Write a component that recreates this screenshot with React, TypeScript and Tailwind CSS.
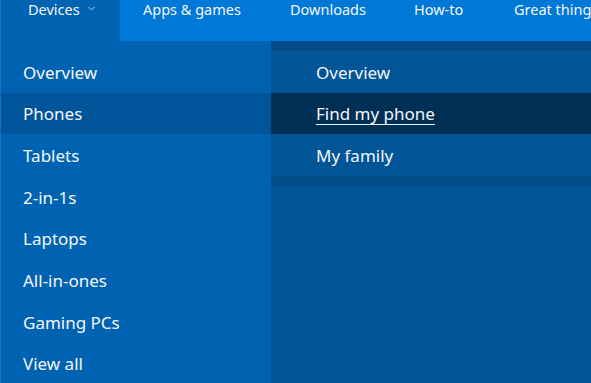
const NAV = [
  { label: 'Apps & games', w: 'w-[147px]' },
  { label: 'Downloads', w: 'w-[124px]' },
  { label: 'How-to', w: 'w-[100px]' },
  { label: 'Great things', w: 'w-[120px]' },
]

const LEFT = ['Overview', 'Phones', 'Tablets', '2-in-1s', 'Laptops', 'All-in-ones', 'Gaming PCs', 'View all']

const RIGHT = ['Overview', 'Find my phone', 'My family']

const font = { fontFamily: '"Segoe UI", "Noto Sans", "Open Sans", sans-serif' }

export default function App() {
  return (
    <div className="flex h-[383px] w-[591px] flex-col overflow-hidden bg-[#0078d7] text-[17px] text-[#f4f6f9]" style={font}>
      {/* top bar */}
      <div className="flex h-[41px] shrink-0 items-start whitespace-nowrap text-[14.5px]">
        <div className="flex h-full w-[120px] shrink-0 items-start border-l border-[#0a74cc] bg-[#0063b1] pl-[27px]">
          <span className="-mt-[1px] leading-[20px]">Devices</span>
          <svg className="ml-[8px] mt-[6px]" width="7" height="5" viewBox="0 0 7 5" fill="none">
            <path d="M0.5 1 L3.5 4 L6.5 1" stroke="#b9cfea" strokeWidth="1" />
          </svg>
        </div>
        <div className="ml-[23px] flex">
          {NAV.map((n) => (
            <span key={n.label} className={`-mt-[1px] shrink-0 leading-[20px] ${n.w}`}>
              {n.label}
            </span>
          ))}
        </div>
      </div>

      {/* dropdown */}
      <div className="flex flex-1">
        <div className="flex w-[271px] shrink-0 flex-col border-l border-[#0a74cc] bg-[#0063b1] pt-[10px]">
          {LEFT.map((n) => (
            <div
              key={n}
              className={`flex h-[41.7px] shrink-0 items-center pl-[22px] pt-[1px] ${n === 'Phones' ? 'bg-[#005499]' : ''}`}
            >
              {n}
            </div>
          ))}
        </div>
        <div className="flex flex-1 flex-col bg-[#005597]">
          <div className="h-[10px] bg-[#004b88]" />
          {RIGHT.map((n) => (
            <div
              key={n}
              className={`flex h-[41.7px] shrink-0 items-center pl-[45px] pt-[1px] ${n === 'Find my phone' ? 'bg-[#002f56]' : ''}`}
            >
              <span className={n === 'Find my phone' ? 'underline decoration-1 underline-offset-[4px]' : ''}>{n}</span>
            </div>
          ))}
          <div className="h-[10px] bg-[#004b88]" />
        </div>
      </div>
    </div>
  )
}
